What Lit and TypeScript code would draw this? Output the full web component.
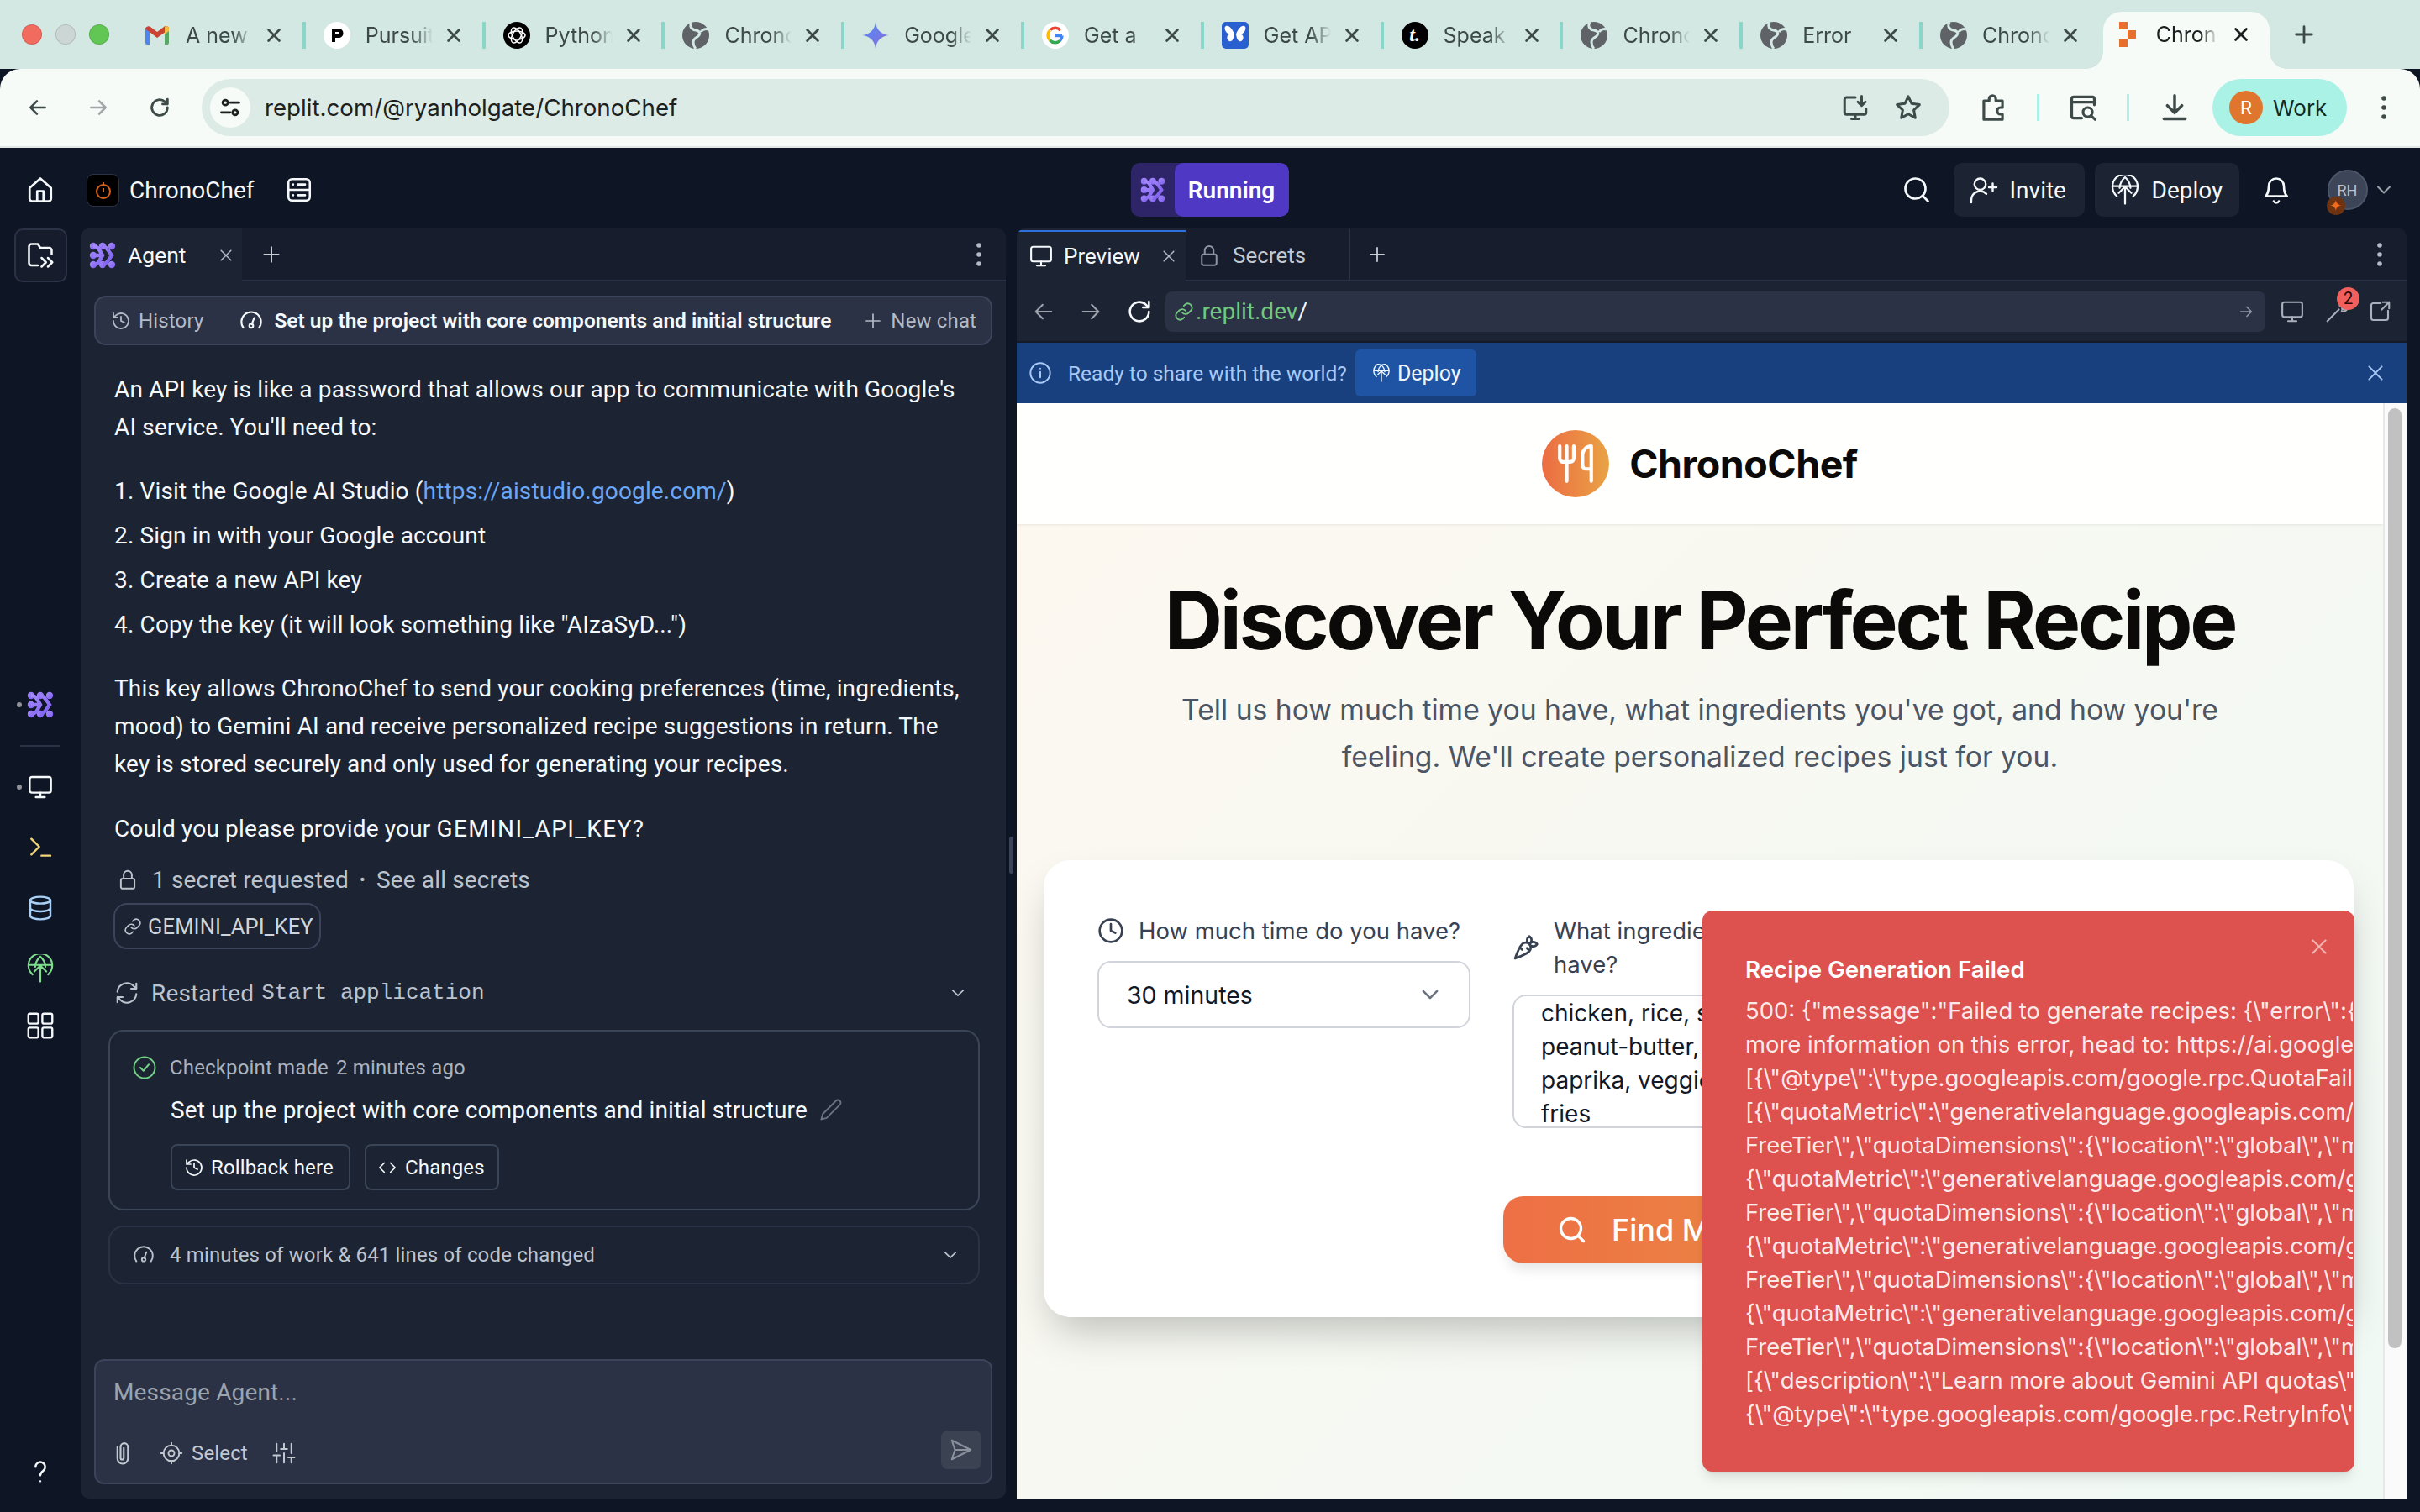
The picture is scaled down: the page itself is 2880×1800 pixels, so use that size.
import { LitElement, html, css, svg } from "lit";
import { customElement } from "lit/decorators.js";

const I = (size: number, color: string, body: any, sw = 2, cls = "") => html`<svg class="i ${cls}" width=${size} height=${size} viewBox="0 0 24 24" fill="none" stroke=${color} stroke-width=${sw} stroke-linecap="round" stroke-linejoin="round">${body}</svg>`;

const P = {
  back: svg`<path d="M20 12H4M11 5l-7 7 7 7"/>`,
  fwd: svg`<path d="M4 12h16M13 5l7 7-7 7"/>`,
  reload: svg`<path d="M20 12a8 8 0 1 1-2.600-5.900L20 8.500M20 3.500v5h-5"/>`,
  tune: svg`<circle cx="7" cy="7" r="2.600"/><path d="M12 7h9M3 17h9"/><circle cx="17" cy="17" r="2.600"/>`,
  install: svg`<path d="M12 4H5a1.500 1.500 0 0 0-1.500 1.500V16A1.500 1.500 0 0 0 5 17.500h14a1.500 1.500 0 0 0 1.500-1.500v-3M9 21h6M12 17.500V21M17 3v7M14 7.500l3 3 3-3"/>`,
  star: svg`<path d="m12 3.200 2.700 5.700 6.200.8-4.500 4.300 1.100 6.200L12 17.200 6.500 20.200l1.100-6.200L3.100 9.700l6.200-.8z"/>`,
  ext: svg`<path d="M9 5.500a2.500 2.500 0 0 1 5 0V7h5v5h-1.500a2.500 2.500 0 0 0 0 5H19v4H5v-4h0V7h4z"/>`,
  tabsearch: svg`<path d="M11 20H5a1.500 1.500 0 0 1-1.500-1.500v-13A1.500 1.500 0 0 1 5 4h14a1.500 1.500 0 0 1 1.500 1.500V10M3.500 8h17"/><circle cx="15.500" cy="15.500" r="3.500"/><path d="m18 18 3 3"/>`,
  download: svg`<path d="M12 3v13M6.500 10.500 12 16l5.500-5.500M4 20.500h16"/>`,
  home: svg`<path d="M3.500 10.500 12 3l8.500 7.500V19a2 2 0 0 1-2 2h-13a2 2 0 0 1-2-2zM9.500 21v-8h5v8"/>`,
  server: svg`<rect x="3" y="3" width="18" height="18" rx="3"/><path d="M3 12h18M7 7.500h.01M11 7.500h6M7 16.500h.01M11 16.500h6"/>`,
  folder: svg`<path d="M10 20H5a2 2 0 0 1-2-2V5a2 2 0 0 1 2-2h5l2 3h7a2 2 0 0 1 2 2v3M13 14l3.500 3.500L13 21M18 14l3.500 3.500L18 21"/>`,
  help: svg`<path d="M8 8a4 4 0 1 1 6.500 3.100C13 12.300 12 13 12 15M12 20h.01"/>`,
  monitor: svg`<rect x="2.500" y="3" width="19" height="14" rx="2"/><path d="M12 17v4M8 21h8"/>`,
  term: svg`<path d="m4 5 7 7-7 7M13 20h8"/>`,
  db: svg`<ellipse cx="12" cy="5" rx="9" ry="3"/><path d="M3 5v14c0 1.700 4 3 9 3s9-1.300 9-3V5M3 12c0 1.700 4 3 9 3s9-1.300 9-3"/>`,
  deploy: svg`<path d="M12 23V9.500M7 14.500l5-5 5 5M5.500 17A10 10 0 1 1 18.500 17M2.500 9h19M12 2C9 4.500 8 7 7.700 10.500M12 2c3 2.500 4 5 4.300 8.500"/>`,
  apps: svg`<rect x="3" y="3" width="7.500" height="7.500" rx="1.200"/><rect x="13.500" y="3" width="7.500" height="7.500" rx="1.200"/><rect x="3" y="13.500" width="7.500" height="7.500" rx="1.200"/><rect x="13.500" y="13.500" width="7.500" height="7.500" rx="1.200"/>`,
  x: svg`<path d="M5 5l14 14M19 5 5 19"/>`,
  plus: svg`<path d="M12 4v16M4 12h16"/>`,
  history: svg`<path d="M3 12a9 9 0 1 0 3-6.700L3 8M3 3v5h5M12 7v5l4 2"/>`,
  gauge: svg`<path d="M4 19a10 10 0 1 1 16 0M12.500 15.500 15 9"/><circle cx="12" cy="17" r="2"/>`,
  lock: svg`<rect x="4.500" y="11" width="15" height="11" rx="2"/><path d="M7.500 11V7a4.500 4.500 0 0 1 9 0v4"/>`,
  link: svg`<path d="M10 13a5 5 0 0 0 7.500.5l3-3a5 5 0 0 0-7-7l-1.700 1.700M14 11a5 5 0 0 0-7.500-.5l-3 3a5 5 0 0 0 7 7l1.700-1.700"/>`,
  restart: svg`<path d="M3 11a9 9 0 0 1 15.500-5.500L21 8M21 3v5h-5M21 13a9 9 0 0 1-15.500 5.500L3 16M3 21v-5h5"/>`,
  chev: svg`<path d="m5 8.500 7 7 7-7"/>`,
  check: svg`<circle cx="12" cy="12" r="10"/><path d="m8 12 3 3 5-6"/>`,
  pencil: svg`<path d="M17 3a2.800 2.800 0 0 1 4 4L7.500 20.500 2 22l1.500-5.500z"/>`,
  code: svg`<path d="m8 6-6 6 6 6M16 6l6 6-6 6"/>`,
  clip: svg`<path d="M7 6v11a5 5 0 0 0 10 0V6a3.500 3.500 0 0 0-7 0v10.500a1.500 1.500 0 0 0 3 0V7"/>`,
  target: svg`<circle cx="12" cy="12" r="8"/><circle cx="12" cy="12" r="3"/><path d="M12 1.500V4M12 20v2.500M1.500 12H4M20 12h2.500"/>`,
  sliders: svg`<path d="M5 21v-7M5 10V3M12 21v-9M12 8V3M19 21v-5M19 12V3M2 14h6M9 8h6M16 16h6"/>`,
  send: svg`<path d="M3 3l18 9-18 9 3-9zM6 12h15"/>`,
  search: svg`<circle cx="11" cy="11" r="8"/><path d="m21 21-4.300-4.300"/>`,
  invite: svg`<circle cx="9" cy="7.500" r="4.500"/><path d="M2 22v-2a7 7 0 0 1 12-4.800M19 7v6M16 10h6"/>`,
  bell: svg`<path d="M6 9a6 6 0 0 1 12 0c0 6 2.500 8 2.500 8h-17S6 15 6 9zM10 21a2.200 2.200 0 0 0 4 0"/>`,
  arrowR: svg`<path d="M5 12h14M13 6l6 6-6 6"/>`,
  wrench: svg`<path d="M3 21 14 10M14.700 6.300a4 4 0 0 1 5-2l-2.700 2.700 0 2.500 2.500 0 2.700-2.700a4 4 0 0 1-5.500 4.500"/>`,
  external: svg`<path d="M13 4H6a2 2 0 0 0-2 2v12a2 2 0 0 0 2 2h12a2 2 0 0 0 2-2v-7M14 10l7-7M15 3h6v6"/>`,
  info: svg`<circle cx="12" cy="12" r="10"/><path d="M12 11v5.500M12 7.500h.01"/>`,
  clock: svg`<circle cx="12" cy="12" r="10"/><path d="M12 6v6l4 2"/>`,
  carrot: svg`<path d="M2.270 21.700s9.870-3.500 12.730-6.360a4.500 4.500 0 0 0-6.360-6.370C5.770 11.840 2.270 21.700 2.270 21.700zM8.640 14l-2.050-2.040M15.340 15l-2.460-2.460M22 9s-1.330-2-3.500-2C16.860 7 15 9 15 9s1.330 2 3.500 2S22 9 22 9zM15 2s-2 1.330-2 3.500S15 9 15 9s2-1.840 2-3.500C17 3.330 15 2 15 2z"/>`,
  utensils: svg`<path d="M3 2v7c0 1.100.9 2 2 2h4a2 2 0 0 0 2-2V2M7 2v20M21 15V2a5 5 0 0 0-5 5v6c0 1.100.9 2 2 2h3Zm0 0v7"/>`,
};

const dots = (color: string, cls = "") => html`<svg class="i ${cls}" width="8" height="30" viewBox="0 0 8 30" fill=${color}><circle cx="4" cy="4" r="2.800"/><circle cx="4" cy="15" r="2.800"/><circle cx="4" cy="26" r="2.800"/></svg>`;

const agentLogo = (size: number) => html`<svg class="i" width=${size} height=${size} viewBox="0 0 32 32"><defs><linearGradient id="ag" x1="0" y1="0" x2="1" y2="1"><stop offset="0" stop-color="#a78bfa"/><stop offset="1" stop-color="#7c5ff0"/></linearGradient></defs><g fill="url(#ag)"><circle cx="5" cy="5" r="4.200"/><circle cx="16" cy="5" r="4.200"/><circle cx="27" cy="5" r="4.200"/><circle cx="5" cy="16" r="4.200"/><circle cx="5" cy="27" r="4.200"/><circle cx="16" cy="27" r="4.200"/><circle cx="27" cy="27" r="4.200"/></g><path d="M5 5 C10 5 11 7 16 16 C11 25 10 27 5 27 M16 5 C21 6 22 9 27 16 C22 23 21 26 16 27 M5 16H14" fill="none" stroke="url(#ag)" stroke-width="4.400"/></svg>`;

const globeFav = html`<svg class="i" width="32" height="32" viewBox="0 0 32 32"><circle cx="16" cy="16" r="16" fill="#5f6368"/><path d="M11 0C8 6 11 9 16 10c5 1 6 4 3 7-2 2-6 3-6 7 0 3 1 6 3 8M31 9c-3-1-7 0-9 3" fill="none" stroke="#d3e8e3" stroke-width="3"/></svg>`;

const favs: any = {
  gmail: html`<svg class="i" width="32" height="32" viewBox="0 0 32 32"><path d="M2 27V7l5-1v21H4a2 2 0 0 1-2-2z" fill="#4e85ee" /><path d="M25 6.500l5 .5v18a2 2 0 0 1-2 2h-3z" fill="#5aa667"/><path d="M2 8a4 4 0 0 1 6-2l8 6 8-6a4 4 0 0 1 6 1v2l-14 10L7 12 2 8.500z" fill="#cb4232"/><path d="M25 6l2-1a3 3 0 0 1 3 3v3l-5 4z" fill="#f2bd42"/></svg>`,
  p: html`<svg class="i" width="32" height="32" viewBox="0 0 32 32"><circle cx="16" cy="16" r="16" fill="#fff"/><path d="M10 8h8a5 5 0 0 1 0 11h-4v5h-4zM14 12v3h3.500a1.500 1.500 0 0 0 0-3z" fill="#000" fill-rule="evenodd"/></svg>`,
  ai: html`<svg class="i" width="32" height="32" viewBox="0 0 32 32"><circle cx="16" cy="16" r="16" fill="#000"/><g fill="none" stroke="#fff" stroke-width="1.500"><ellipse cx="16" cy="16" rx="10" ry="5"/><ellipse cx="16" cy="16" rx="10" ry="5" transform="rotate(60 16 16)"/><ellipse cx="16" cy="16" rx="10" ry="5" transform="rotate(120 16 16)"/></g></svg>`,
  gem: html`<svg class="i" width="32" height="32" viewBox="0 0 32 32"><defs><linearGradient id="gm" x1="0" y1="0" x2="1" y2="1"><stop offset="0" stop-color="#4f8df5"/><stop offset="1" stop-color="#8a6bd8"/></linearGradient></defs><path d="M16 0c1 9 6 15 16 16-10 1-15 7-16 16-1-9-6-15-16-16C10 15 15 9 16 0z" fill="url(#gm)"/></svg>`,
  g: html`<svg class="i" width="32" height="32" viewBox="0 0 32 32"><circle cx="16" cy="16" r="16" fill="#fff"/><path d="M24 16.500H16" stroke="#4285f4" stroke-width="3.500"/><path d="M22 10a8.500 8.500 0 0 0-12-.5" fill="none" stroke="#ea4335" stroke-width="3.500"/><path d="M9.500 10a8.500 8.500 0 0 0 0 12" fill="none" stroke="#fbbc05" stroke-width="3.500"/><path d="M9.500 22a8.500 8.500 0 0 0 12 .5" fill="none" stroke="#34a853" stroke-width="3.500"/><path d="M21.500 22.500a8.500 8.500 0 0 0 2.500-6" fill="none" stroke="#4285f4" stroke-width="3.500"/></svg>`,
  api: html`<svg class="i" width="32" height="32" viewBox="0 0 32 32"><rect width="32" height="32" rx="5" fill="#2a5fd0"/><path d="M15 15C13 9 9 4 5 5c-3 1-1 8 4 10-4 1-3 7 0 8s5-2 6-8zM17 15c2-6 6-11 10-10 3 1 1 8-4 10 4 1 3 7 0 8s-5-2-6-8z" fill="#fff"/></svg>`,
  t: html`<span class="tfav">t.</span>`,
  globe: globeFav,
  rep: html`<svg class="i" width="32" height="32" viewBox="0 0 32 32"><g fill="#e8702e"><rect x="5" y="1" width="10" height="9"/><rect x="15" y="11" width="10" height="10"/><rect x="5" y="22" width="10" height="9"/></g></svg>`,
};

const tabs = [
  ["gmail", "A new"], ["p", "Pursuit"], ["ai", "Python"], ["globe", "Chrono"], ["gem", "Google"], ["g", "Get a"],
  ["api", "Get API"], ["t", "Speak"], ["globe", "Chrono"], ["globe", "Error"], ["globe", "Chrono"],
];

const errLines = [
  String.raw`500: {"message":"Failed to generate recipes: {\"error\":{\"code\"`,
  String.raw`more information on this error, head to: https://ai.google.dev`,
  String.raw`[{\"@type\":\"type.googleapis.com/google.rpc.QuotaFailure\"`,
  String.raw`[{\"quotaMetric\":\"generativelanguage.googleapis.com/free`,
  String.raw`FreeTier\",\"quotaDimensions\":{\"location\":\"global\",\"model\"`,
  String.raw`{\"quotaMetric\":\"generativelanguage.googleapis.com/generate`,
  String.raw`FreeTier\",\"quotaDimensions\":{\"location\":\"global\",\"model\"`,
  String.raw`{\"quotaMetric\":\"generativelanguage.googleapis.com/generate`,
  String.raw`FreeTier\",\"quotaDimensions\":{\"location\":\"global\",\"model\"`,
  String.raw`{\"quotaMetric\":\"generativelanguage.googleapis.com/generate`,
  String.raw`FreeTier\",\"quotaDimensions\":{\"location\":\"global\",\"model\"`,
  String.raw`[{\"description\":\"Learn more about Gemini API quotas\",\"url`,
  String.raw`{\"@type\":\"type.googleapis.com/google.rpc.RetryInfo\",\"retry`,
];

@customElement("app-root")
export class AppRoot extends LitElement {
  static styles = css`
    :host { display: block; width: 2880px; height: 1800px; overflow: hidden; background: #0e1525; font-family: "Roboto", "Liberation Sans", sans-serif; --plex: "Roboto", "Liberation Sans", sans-serif; }
    * { box-sizing: border-box; }
    .i { display: block; flex: none; }

    /* browser chrome */
    .tabstrip { height: 82px; background: #d3e8e3; display: flex; align-items: flex-start; font-family: "Inter", sans-serif; }
    .lights { width: 150px; height: 82px; flex: none; display: flex; gap: 16px; padding: 29px 0 0 26px; }
    .light { width: 24px; height: 24px; border-radius: 50%; border: 1px solid rgba(0,0,0,.12); }
    .tab { width: 213.8px; height: 32px; margin-top: 26px; flex: none; display: flex; align-items: center; padding-left: 21px; border-right: 4px solid #8ad6c8; font-size: 25px; color: #3d4a48; }
    .tab.nosep { border-right-color: transparent; }
    .tab .tt { width: 80px; margin-left: 18px; white-space: nowrap; overflow: hidden; -webkit-mask-image: linear-gradient(90deg, #000 70%, transparent 100%); mask-image: linear-gradient(90deg, #000 70%, transparent 100%); }
    .tab .cl { margin-left: 14px; }
    .tfav { width: 32px; height: 32px; flex: none; background: #000; color: #fff; border-radius: 50%; font: italic 700 24px/30px "Liberation Serif", serif; text-align: center; }
    .acttab { width: 198px; height: 68px; margin-top: 14px; margin-left: 1px; flex: none; background: #f6fbf8; border-radius: 22px 22px 0 0; display: flex; align-items: center; padding: 0 0 14px 14px; font-size: 25px; color: #1b1f1f; position: relative; }
    .acttab::before, .acttab::after { content: ""; position: absolute; bottom: 0; width: 20px; height: 20px; }
    .acttab::before { left: -20px; background: radial-gradient(circle at 0 0, #d3e8e3 19.500px, #f6fbf8 20px); }
    .acttab::after { right: -20px; background: radial-gradient(circle at 100% 0, #d3e8e3 19.500px, #f6fbf8 20px); }
    .acttab .tt { width: 74px; margin-left: 17px; white-space: nowrap; overflow: hidden; -webkit-mask-image: linear-gradient(90deg, #000 70%, transparent 100%); mask-image: linear-gradient(90deg, #000 70%, transparent 100%); }
    .acttab .cl { margin-left: 16px; }
    .newtab { margin: 27px 0 0 27px; }
    .toolbar { height: 92px; background: #f6fbf8; border-radius: 24px 24px 0 0; display: flex; align-items: center; padding-left: 32px; font-family: "Inter", sans-serif; }
    .nav { width: 72px; flex: none; }
    .omni { margin-left: -8px; width: 2080px; height: 68px; background: #dcebe6; border-radius: 34px; flex: none; display: flex; align-items: center; padding: 0 31px 0 10px; font-size: 27.700px; color: #1c2120; }
    .site { width: 48px; height: 48px; border-radius: 50%; background: #f6fbf8; display: flex; align-items: center; justify-content: center; margin-right: 17px; flex: none; }
    .omni .sp { flex: 1; }
    .omni .inst { margin-right: 27px; }
    .tright { display: flex; align-items: center; flex: 1; }
    .sepv { width: 3px; height: 32px; background: #aaf2e6; flex: none; }
    .work { width: 160px; height: 68px; background: #aaf2e6; border-radius: 34px; display: flex; align-items: center; padding-left: 20px; gap: 12px; font-size: 26px; color: #102a26; flex: none; margin-left: 26px; }
    .workav { width: 40px; height: 40px; border-radius: 50%; background: #e0752e; color: #fff; font-size: 22px; display: flex; align-items: center; justify-content: center; font-weight: 400; }
    .rim { height: 2px; background: #e2e8e6; }

    /* replit top */
    .topbar { height: 96px; display: flex; align-items: center; padding-top: 4px; color: #f5f9fc; font-family: var(--plex); font-size: 28px; }
    .pill { display: flex; height: 64px; width: 188px; border-radius: 10px; overflow: hidden; flex: none; background: #2d2567; margin-left: 973px; }
    .pill .l { width: 52px; display: flex; align-items: center; justify-content: center; }
    .pill .r { flex: 1; background: #4f38c4; border-radius: 10px; display: flex; align-items: center; justify-content: center; font-weight: 600; color: #fff; }
    .tbtn { height: 64px; background: #1c2333; border-radius: 10px; display: flex; align-items: center; padding-left: 18px; flex: none; }
    .avatar { width: 48px; height: 48px; border-radius: 50%; background: #3d4558; color: #b9c0cb; font-size: 18px; display: flex; align-items: center; justify-content: center; position: relative; flex: none; border: 2px solid #4c5468; }
    .spark { position: absolute; left: -3px; bottom: -8px; width: 22px; height: 22px; border-radius: 50%; background: #6e3310; display: flex; align-items: center; justify-content: center; color: #f26a1b; font-size: 18px; line-height: 1; }

    .main { height: 1512px; display: flex; }
    .rail { width: 96px; flex: none; display: flex; flex-direction: column; align-items: center; position: relative; }
    .railbtn { width: 63px; height: 64px; border: 2px solid #2b3245; border-radius: 10px; display: flex; align-items: center; justify-content: center; margin-top: 0; background: #161c2b; }
    .railrow { height: 40px; display: flex; align-items: center; justify-content: center; width: 96px; position: relative; }
    .dot { position: absolute; left: 20px; top: 17px; width: 6px; height: 6px; border-radius: 50%; background: #8e9298; }
    .raildiv { width: 48px; height: 2px; background: #2b3245; }

    .panel { background: #1c2333; border-radius: 10px 10px 0 0; display: flex; flex-direction: column; overflow: hidden; flex: none; }
    .agent { width: 1101px; font-family: var(--plex); color: #f5f9fc; border-radius: 10px; letter-spacing: .15px; }
    .ptabs { height: 63px; background: #171d2d; display: flex; align-items: stretch; border-bottom: 2px solid #2b3245; flex: none; font-size: 28px; }
    .ptab { display: flex; align-items: center; background: #1c2333; margin-bottom: -2px; position: relative; flex: none; }
    .ptabs .pl { margin-left: 22px; align-self: center; }
    .ptabs .more { margin-left: auto; margin-right: 28px; align-self: center; }

    .bar { margin: 17px 16px 0; height: 59px; background: #2b3245; border: 2px solid #3c445c; border-radius: 14px; display: flex; align-items: center; font-size: 24px; color: #b4bac6; padding-left: 18px; flex: none; white-space: nowrap; }
    .bar b { font-weight: 600; color: #f5f9fc; font-size: 24.500px; letter-spacing: 0; }
    .msg { margin: 30px 0 0 40px; width: 1030px; font-size: 28px; line-height: 45px; color: #f5f9fc; }
    .msg p { margin: 0; }
    .msg .li { line-height: 53px; }
    .msg a { color: #6aa7f8; text-decoration: none; }
    .caps { letter-spacing: 1.400px; }
    .row { display: flex; align-items: center; white-space: nowrap; flex: none; }
    .secret { margin: 18px 0 0 43px; height: 40px; font-size: 28px; color: #bcc3cd; }
    .chip { margin: 8px 0 0 39px; height: 55px; width: 247px; border: 2px solid #3c445c; border-radius: 16px; font-size: 25.500px; color: #cfd5dc; padding-left: 10px; }
    .restart { margin: 27px 0 0 40px; height: 50px; font-size: 28px; color: #bcc3cd; width: 1015px; }
    .mono { font-family: "Liberation Mono", monospace; font-size: 26px; margin-left: 9px; letter-spacing: 0; }
    .card { margin: 19px 0 0 33px; width: 1037px; border: 2px solid #3a4558; border-radius: 18px; flex: none; }
    .cp { height: 215px; display: flex; flex-direction: column; padding: 21px 0 0 72px; position: relative; }
    .cphead { font-size: 24px; color: #aab2bf; height: 44px; margin-left: -72px; padding-left: 26px; }
    .cptitle { font-size: 28px; margin-top: 6px; height: 44px; color: #f5f9fc; }
    .btns { display: flex; gap: 17px; margin-top: 19px; }
    .bt { height: 55px; border: 2px solid #3a4558; border-radius: 8px; font-size: 24px; color: #f5f9fc; padding-left: 14px; }
    .sum { margin-top: 18px; height: 70px; padding-left: 27px; font-size: 24px; color: #bcc3cd; border-color: #2b3245; }
    .fill { flex: 1; }
    .input { margin: 0 16px 17px; height: 149px; background: #2b3245; border: 2px solid #3c445c; border-radius: 12px; flex: none; padding: 21px 0 0 21px; display: flex; flex-direction: column; font-size: 28px; color: #9da3ad; }
    .tools { margin-top: 32px; font-size: 24px; color: #c2c8d0; height: 48px; margin-left: -4px; }
    .send { width: 48px; height: 46px; background: #3b4252; border-radius: 8px; display: flex; align-items: center; justify-content: center; margin-left: auto; margin-right: 11px; margin-top: -8px; }

    .gutter { width: 13px; flex: none; display: flex; align-items: center; justify-content: center; padding-bottom: 20px; }
    .handle { width: 5px; height: 44px; background: #3c445c; border-radius: 3px; }

    .preview { width: 1654px; color: #f5f9fc; font-family: var(--plex); }
    .preview .ptab { border-top: 2px solid transparent; }
    .urlrow { height: 71px; display: flex; align-items: center; flex: none; border-bottom: 0; }
    .url { width: 1309px; height: 48px; background: #2b3245; border-radius: 8px; display: flex; align-items: center; padding-left: 10px; font-size: 28px; flex: none; }
    .url .g { color: #74c77f; }
    .blue { height: 74px; background: #183f7e; border-top: 2px solid #141a28; display: flex; align-items: center; flex: none; font-size: 24.500px; color: #a9c9f5; padding-left: 14px; }
    .bdep { width: 144px; height: 56px; background: #1f54a4; border-radius: 6px; display: flex; align-items: center; gap: 8px; padding-left: 20px; color: #f0f5fc; font-size: 25px; margin-left: 10px; }
    .wrapBadge { position: relative; }
    .badge { position: absolute; right: -12px; top: -14px; width: 27px; height: 27px; border-radius: 50%; background: #f0605c; color: #2b0505; font-size: 20px; display: flex; align-items: center; justify-content: center; }

    .pagewrap { flex: 1; display: flex; min-height: 0; }
    .page { flex: 1; position: relative; overflow: hidden; background: linear-gradient(135deg, #fdf8f0 0%, #f0f9f4 100%); font-family: "Inter", sans-serif; color: #0c0a09; }
    .sbar { width: 28px; flex: none; background: #fafafa; border-left: 2px solid #e8e8e8; padding: 6px 0 0 4px; }
    .thumb { width: 16px; height: 1119px; background: #c1c1c1; border-radius: 8px; }
    .phead { height: 144px; background: #fffffd; box-shadow: 0 1px 3px rgba(0,0,0,.08); display: flex; align-items: center; justify-content: center; gap: 24px; }
    .logo { width: 80px; height: 80px; border-radius: 50%; background: linear-gradient(90deg, #ec6c43, #e9a345); display: flex; align-items: center; justify-content: center; }
    .phead span { font-size: 46.500px; font-weight: 700; letter-spacing: -.5px; }
    h1 { margin: 66px 0 0; font-size: 96px; line-height: 96px; font-weight: 700; letter-spacing: -3.200px; text-align: center; }
    .sub { margin: 31px 0 0; text-align: center; font-size: 33.700px; line-height: 56px; color: #4b5563; }
    .fcard { margin: 95px 35px 0 32px; height: 544px; background: #fff; border-radius: 32px; box-shadow: 0 25px 50px -12px rgba(0,0,0,.25); padding: 64px 64px 0; }
    .fgrid { display: grid; grid-template-columns: 444px 444px 444px; column-gap: 50px; height: 336px; }
    .lab { display: flex; align-items: center; font-size: 27.500px; line-height: 40px; color: #374151; gap: 17px; white-space: nowrap; }
    .lab.two { gap: 17px; }
    .select { margin-top: 16px; height: 80px; border: 2px solid #d1d5db; border-radius: 16px; display: flex; align-items: center; justify-content: space-between; padding: 0 32px 0 33px; font-size: 28.500px; color: #111827; }
    .ta { margin-top: 16px; height: 159px; border: 2px solid #d1d5db; border-radius: 16px; overflow: hidden; padding: 0 0 0 32px; font-size: 28px; line-height: 40px; color: #111827; white-space: nowrap; }
    .find { margin-left: 483px; width: 465px; height: 80px; border-radius: 24px; background: linear-gradient(90deg, #ee6f45, #e98f42); box-shadow: 0 10px 15px -3px rgba(0,0,0,.1); color: #fff; font-size: 36px; font-weight: 500; display: flex; align-items: center; padding-left: 64px; gap: 29px; white-space: nowrap; }
    .toast { position: absolute; top: 604px; right: 34px; width: 776px; height: 668px; background: #dd524e; border-radius: 12px; box-shadow: 0 10px 15px -3px rgba(0,0,0,.1), 0 4px 6px -4px rgba(0,0,0,.1); color: #fff; padding: 50px 2px 0 51px; font-size: 27.400px; overflow: hidden; }
    .toast h3 { margin: 0 0 9px; font-size: 27.700px; line-height: 40px; font-weight: 600; }
    .toast .ln { line-height: 40px; height: 40px; white-space: nowrap; overflow: hidden; color: rgba(255,255,255,.9); }
    .toast .tx { position: absolute; right: 29px; top: 30px; }
  `;

  render() {
    const W = "#f5f9fc";
    return html`
      <div class="tabstrip">
        <div class="lights">
          <div class="light" style="background:#f26b5f"></div>
          <div class="light" style="background:#ccd7d5"></div>
          <div class="light" style="background:#62c655"></div>
        </div>
        ${tabs.map((t, i) => html`<div class="tab ${i === 10 ? "nosep" : ""}">${favs[t[0]]}<div class="tt">${t[1]}</div><div class="cl">${I(22, "#3d4a48", P.x, 3)}</div></div>`)}
        <div class="acttab">${favs.rep}<div class="tt">Chrono</div><div class="cl">${I(22, "#1b1f1f", P.x, 3)}</div></div>
        <div class="newtab">${I(28, "#3d4a48", P.plus, 2.4)}</div>
      </div>
      <div class="toolbar">
        <div class="nav">${I(26, "#3d4a48", P.back, 2.4)}</div>
        <div class="nav">${I(26, "#a0a6a5", P.fwd, 2.4)}</div>
        <div class="nav">${I(28, "#3d4a48", P.reload, 2.4)}</div>
        <div class="omni">
          <div class="site">${I(28, "#1c2120", P.tune, 2.4)}</div>
          <span>replit.com/@ryanholgate/ChronoChef</span>
          <div class="sp"></div>
          <div class="inst">${I(36, "#3d4a48", P.install, 2)}</div>
          <div>${I(36, "#3d4a48", P.star, 2)}</div>
        </div>
        <div class="tright">
          <div style="margin-left:33px">${I(38, "#3d4a48", P.ext, 2)}</div>
          <div class="sepv" style="margin-left:33px"></div>
          <div style="margin-left:33px">${I(38, "#3d4a48", P.tabsearch, 2)}</div>
          <div class="sepv" style="margin-left:33px"></div>
          <div style="margin-left:35px">${I(38, "#3d4a48", P.download, 2.2)}</div>
          <div class="work"><div class="workav">R</div>Work</div>
          <div style="margin-left:40px">${dots("#3d4a48")}</div>
        </div>
      </div>
      <div class="rim"></div>

      <div class="topbar">
        <div style="width:103px;padding-left:30px">${I(36, W, P.home, 1.8)}</div>
        <div style="width:39px;height:39px;background:#000;border-radius:8px;display:flex;align-items:center;justify-content:center;border:1px solid #2b3245">
          <svg class="i" width="22" height="24" viewBox="0 0 22 24" fill="none" stroke="#d9621d" stroke-width="2"><circle cx="11" cy="14" r="8"/><path d="M11 3v3M11 10v4"/></svg>
        </div>
        <span style="margin-left:12px">ChronoChef</span>
        <div style="margin-left:36px">${I(34, W, P.server, 1.8)}</div>
        <div class="pill"><div class="l">${agentLogo(30)}</div><div class="r">Running</div></div>
        <div style="margin-left:729px">${I(36, W, P.search, 1.8)}</div>
        <div class="tbtn" style="margin-left:26px;width:156px">${I(36, W, P.invite, 1.6)}<span style="margin-left:13px">Invite</span></div>
        <div class="tbtn" style="margin-left:12px;width:172px">${I(36, W, P.deploy, 1.5)}<span style="margin-left:14px">Deploy</span></div>
        <div style="margin-left:26px">${I(36, W, P.bell, 1.7)}</div>
        <div class="avatar" style="margin-left:43px">RH<div class="spark">✦</div></div>
        <div style="margin-left:7px">${I(24, "#9da3ad", P.chev, 2)}</div>
      </div>

      <div class="main">
        <div class="rail">
          <div class="railbtn">${I(36, W, P.folder, 1.7)}</div>
          <div class="railrow" style="margin-top:483px"><div class="dot"></div>${agentLogo(32)}</div>
          <div class="raildiv" style="margin-top:28px"></div>
          <div class="railrow" style="margin-top:28px"><div class="dot"></div>${I(32, W, P.monitor, 1.8)}</div>
          <div class="railrow" style="margin-top:31px">${I(32, "#f3d678", P.term, 1.8)}</div>
          <div class="railrow" style="margin-top:33px">${I(32, "#a9d1f8", P.db, 1.8)}</div>
          <div class="railrow" style="margin-top:32px">${I(34, "#7fdc8d", P.deploy, 1.5)}</div>
          <div class="railrow" style="margin-top:28px">${I(38, W, P.apps, 1.5)}</div>
          <div class="fill"></div>
          <div class="railrow" style="margin-bottom:12px">${I(34, W, P.help, 1.7)}</div>
        </div>

        <div class="panel agent">
          <div class="ptabs">
            <div class="ptab" style="width:192px;padding-left:10px;font-size:26.500px;letter-spacing:0">${agentLogo(32)}<span style="margin-left:14px">Agent</span><div style="margin-left:37px">${I(20, "#b4bac6", P.x, 1.8)}</div></div>
            <div class="pl">${I(26, "#c8ced6", P.plus, 1.8)}</div>
            <div class="more">${dots("#b4bac6")}</div>
          </div>
          <div class="bar">
            ${I(24, "#b4bac6", P.history, 1.8)}<span style="margin-left:9px">History</span>
            <div style="margin-left:43px">${I(28, W, P.gauge, 1.8)}</div><b style="margin-left:13px">Set up the project with core components and initial structure</b>
            <div style="margin-left:38px">${I(24, "#b4bac6", P.plus, 1.7)}</div><span style="margin-left:9px">New chat</span>
          </div>
          <div class="msg">
            <p>An API key is like a password that allows our app to communicate with Google's<br>AI service. You'll need to:</p>
            <p class="li" style="margin-top:27px">1. Visit the Google AI Studio (<a>https://aistudio.google.com/</a>)</p>
            <p class="li">2. Sign in with your Google account</p>
            <p class="li">3. Create a new API key</p>
            <p class="li">4. Copy the key (it will look something like "AIzaSyD...")</p>
            <p style="margin-top:27px">This key allows ChronoChef to send your cooking preferences (time, ingredients,<br>mood) to Gemini AI and receive personalized recipe suggestions in return. The<br>key is stored securely and only used for generating your recipes.</p>
            <p style="margin-top:32px">Could you please provide your <span class="caps">GEMINI_API_KEY</span>?</p>
          </div>
          <div class="row secret">${I(26, "#bcc3cd", P.lock, 1.8)}<span style="margin-left:16px">1 secret requested</span><span style="margin:0 13px;font-size:20px">•</span><span>See all secrets</span></div>
          <div class="row chip">${I(22, "#bcc3cd", P.link, 1.8)}<span style="margin-left:7px">GEMINI_API_KEY</span></div>
          <div class="row restart">${I(30, "#bcc3cd", P.restart, 1.7)}<span style="margin-left:14px">Restarted</span><span class="mono">Start application</span><div style="margin-left:auto">${I(22, "#bcc3cd", P.chev, 1.8)}</div></div>
          <div class="card cp">
            <div class="row cphead">${I(30, "#74d186", P.check, 1.6)}<span style="margin-left:15px">Checkpoint made</span><span style="margin-left:9px">2 minutes ago</span></div>
            <div class="row cptitle">Set up the project with core components and initial structure<div style="margin-left:14px">${I(28, "#6b7382", P.pencil, 1.6)}</div></div>
            <div class="btns">
              <div class="row bt" style="width:214px">${I(24, W, P.history, 1.7)}<span style="margin-left:8px">Rollback here</span></div>
              <div class="row bt" style="width:160px">${I(22, W, P.code, 1.8)}<span style="margin-left:10px">Changes</span></div>
            </div>
          </div>
          <div class="card row sum">${I(26, "#bcc3cd", P.gauge, 1.8)}<span style="margin-left:18px">4 minutes of work &amp; 641 lines of code changed</span><div style="margin-left:auto;margin-right:22px">${I(22, "#bcc3cd", P.chev, 1.8)}</div></div>
          <div class="fill"></div>
          <div class="input">
            <div>Message Agent...</div>
            <div class="row tools">
              ${I(30, "#c2c8d0", P.clip, 1.7)}
              <div style="margin-left:29px">${I(28, "#c2c8d0", P.target, 1.7)}</div><span style="margin-left:10px">Select</span>
              <div style="margin-left:28px">${I(30, "#c2c8d0", P.sliders, 1.6)}</div>
              <div class="send">${I(30, "#8a909c", P.send, 1.6)}</div>
            </div>
          </div>
        </div>

        <div class="gutter"><div class="handle"></div></div>

        <div class="panel preview">
          <div class="ptabs" style="font-size:26px">
            <div class="ptab" style="width:201px;padding-left:14px;box-shadow:inset 0 2px 0 #2f6fde;margin-left:0">${I(30, W, P.monitor, 1.7)}<span style="margin-left:12px">Preview</span><div style="margin-left:24px">${I(20, "#b4bac6", P.x, 1.8)}</div></div>
            <div class="ptab" style="width:196px;padding-left:14px;background:transparent;border-right:1px solid #2b3245;margin-bottom:0;color:#c2c8d0">${I(28, "#8e95a3", P.lock, 1.7)}<span style="margin-left:14px">Secrets</span></div>
            <div class="pl" style="margin-left:20px">${I(24, "#c8ced6", P.plus, 1.8)}</div>
            <div class="more">${dots("#b4bac6")}</div>
          </div>
          <div class="urlrow">
            <div style="margin-left:18px">${I(28, "#9da3ad", P.back, 1.8)}</div>
            <div style="margin-left:28px">${I(28, "#9da3ad", P.fwd, 1.8)}</div>
            <div style="margin-left:27px">${I(34, W, P.reload, 1.8)}</div>
            <div class="url" style="margin-left:14px">
              ${I(24, "#74c77f", P.link, 1.8)}<span class="g" style="margin-left:2px">.replit.dev</span><span>/</span>
              <div style="margin-left:auto;margin-right:12px">${I(22, "#8e95a3", P.arrowR, 1.8)}</div>
            </div>
            <div style="margin-left:17px">${I(30, "#a9b0bc", P.monitor, 1.7)}</div>
            <div class="wrapBadge" style="margin-left:23px">${I(30, "#a9b0bc", P.wrench, 1.7)}<div class="badge">2</div></div>
            <div style="margin-left:21px">${I(30, "#a9b0bc", P.external, 1.7)}</div>
          </div>
          <div class="blue">
            ${I(28, "#a9c9f5", P.info, 1.7)}<span style="margin-left:19px">Ready to share with the world?</span>
            <div class="bdep">${I(22, "#f0f5fc", P.deploy, 1.5)}Deploy</div>
            <div style="margin-left:auto;margin-right:24px">${I(26, "#a9c9f5", P.x, 1.8)}</div>
          </div>
          <div class="pagewrap">
            <div class="page">
              <div class="phead">
                <div class="logo">${I(50, "#fff", P.utensils, 2)}</div>
                <span>ChronoChef</span>
              </div>
              <h1>Discover Your Perfect Recipe</h1>
              <p class="sub">Tell us how much time you have, what ingredients you've got, and how you're<br>feeling. We'll create personalized recipes just for you.</p>
              <div class="fcard">
                <div class="fgrid">
                  <div>
                    <div class="lab">${I(32, "#374151", P.clock, 2)}How much time do you have?</div>
                    <div class="select">30 minutes ${I(28, "#6b7280", P.chev, 2.2)}</div>
                  </div>
                  <div>
                    <div class="lab two">${I(32, "#374151", P.carrot, 2)}<span>What ingredients do you<br>have?</span></div>
                    <div class="ta">chicken, rice, soy sauce,<br>peanut-butter, garlic,<br>paprika, veggie oil,<br>fries</div>
                  </div>
                  <div></div>
                </div>
                <div class="find">${I(36, "#fff", P.search, 2.2)}Find My Recipes</div>
              </div>
              <div class="toast">
                <div class="tx">${I(26, "rgba(255,255,255,.55)", P.x, 2)}</div>
                <h3>Recipe Generation Failed</h3>
                ${errLines.map((l) => html`<div class="ln">${l}</div>`)}
              </div>
            </div>
            <div class="sbar"><div class="thumb"></div></div>
          </div>
        </div>
      </div>
    `;
  }
}
